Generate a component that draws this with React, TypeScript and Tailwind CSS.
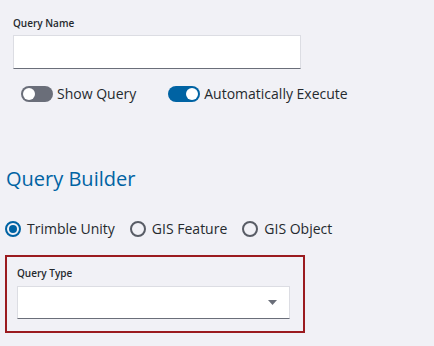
import { useState } from 'react';

const Toggle = ({ on, label, onClick }: { on: boolean; label: string; onClick: () => void }) => (
  <button type="button" onClick={onClick} className="flex items-center gap-[4px] text-[14px] leading-[20px] text-[#252a2e]">
    <span
      className={`relative flex h-[16px] w-[32px] items-center rounded-full px-[2px] ${
        on ? 'justify-end bg-[#0063a3]' : 'justify-start bg-[#6a6e79]'
      }`}
    >
      <span className="h-[12px] w-[12px] rounded-full bg-white" />
    </span>
    <span>{label}</span>
  </button>
);

const Radio = ({ checked, label, onClick }: { checked: boolean; label: string; onClick: () => void }) => (
  <button type="button" onClick={onClick} className="flex items-center gap-[6px] text-[14px] leading-[20px] text-[#252a2e]">
    <span
      className={`flex h-[16px] w-[16px] items-center justify-center rounded-full border-2 ${
        checked ? 'border-[#0063a3]' : 'border-[#585c65]'
      }`}
    >
      {checked && <span className="h-[8px] w-[8px] rounded-full bg-[#0063a3]" />}
    </span>
    <span>{label}</span>
  </button>
);

export default function App() {
  const [showQuery, setShowQuery] = useState(false);
  const [autoExec, setAutoExec] = useState(true);
  const [source, setSource] = useState('unity');

  return (
    <div className="min-h-screen bg-[#f1f1f6] font-['Open_Sans',sans-serif] text-[#252a2e]">
      {/* Query name */}
      <div className="pl-[13px] pt-[16px]">
        <label className="mb-[5px] block text-[10px] font-semibold leading-[14px] text-[#252a2e]">Query Name</label>
        <input
          type="text"
          className="block h-[34px] w-[288px] border border-[#dcdde3] border-b-[#6a6e79] bg-white px-2 text-[14px] outline-none"
        />
      </div>

      {/* Toggles */}
      <div className="mt-[15px] flex items-center gap-[32px] pl-[21px]">
        <Toggle on={showQuery} label="Show Query" onClick={() => setShowQuery(!showQuery)} />
        <Toggle on={autoExec} label="Automatically Execute" onClick={() => setAutoExec(!autoExec)} />
      </div>

      {/* Query builder */}
      <h2 className="mt-[61px] pl-[6px] text-[20px] font-normal leading-[27px] text-[#0063a3]">Query Builder</h2>

      <div className="mt-[27px] flex items-center gap-[15px] pl-[5px]">
        <Radio checked={source === 'unity'} label="Trimble Unity" onClick={() => setSource('unity')} />
        <Radio checked={source === 'feature'} label="GIS Feature" onClick={() => setSource('feature')} />
        <Radio checked={source === 'object'} label="GIS Object" onClick={() => setSource('object')} />
      </div>

      <div className="ml-[5px] mt-[16px] w-[300px] border-2 border-[#9b1b1f] pb-[12px] pl-[10px] pr-[13px] pt-[9px]">
        <label className="mb-[6px] block text-[10px] font-semibold leading-[14px] text-[#252a2e]">Query Type</label>
        <div className="relative flex h-[33px] w-full items-center justify-end border border-[#dcdde3] border-b-[#6a6e79] bg-white pr-[12px]">
          <svg width="9" height="5" viewBox="0 0 9 5">
            <path d="M0 0h9L4.5 5z" fill="#6a6e79" />
          </svg>
        </div>
      </div>
    </div>
  );
}
